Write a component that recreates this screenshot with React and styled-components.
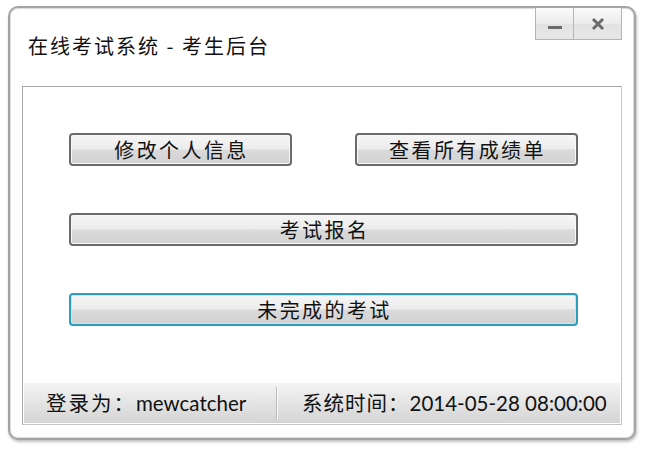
import React from "react";
import styled, { createGlobalStyle } from "styled-components";

const Global = createGlobalStyle`
  html, body { margin: 0; padding: 0; background: #ffffff; }
  body { font-family: Lato, "Noto Sans CJK SC", sans-serif; }
`;

const Page = styled.div`
  width: 650px;
  height: 450px;
  padding: 6px 0 0 8px;
  box-sizing: border-box;
`;

const Window = styled.div`
  width: 628px;
  height: 434px;
  box-sizing: border-box;
  border: 2px solid #a4a4a4;
  border-radius: 10px;
  background: #ffffff;
  box-shadow: 1px 2px 3px rgba(0, 0, 0, 0.25), inset 0 0 0 1px #dcdcdc;
  display: flex;
  flex-direction: column;
  padding: 0 12px 13px 12px;
`;

const TitleBar = styled.div`
  height: 78px;
  display: flex;
  align-items: flex-start;
  justify-content: space-between;
`;

const Title = styled.div`
  margin: 24px 0 0 6px;
  font-family: "Noto Sans CJK SC", sans-serif;
  font-size: 20px;
  line-height: 28px;
  letter-spacing: 2px;
  color: #111;
`;

const Controls = styled.div`
  display: flex;
`;

const CtrlButton = styled.div`
  width: ${(p) => p.$w}px;
  height: 32px;
  box-sizing: border-box;
  border: 1px solid #b4b4b4;
  border-top: none;
  margin-left: -1px;
  background: linear-gradient(#fafafa, #ececec 50%, #e2e2e2 51%, #e8e8e8);
  display: flex;
  align-items: center;
  justify-content: center;
  color: #6a6a6a;
`;

const Panel = styled.div`
  flex: 1;
  border: 1px solid #a8a8a8;
  border-right-color: #c4c4c4;
  border-bottom-color: #c4c4c4;
  display: flex;
  flex-direction: column;
`;

const Grid = styled.div`
  flex: 1;
  display: grid;
  grid-template-columns: 1fr 1fr;
  grid-auto-rows: 33px;
  column-gap: 63px;
  row-gap: 47px;
  padding: 46px 43px 0 46px;
  align-content: start;
`;

const Btn = styled.button`
  grid-column: ${(p) => (p.$wide ? "1 / span 2" : "auto")};
  height: 33px;
  margin: 0;
  padding: 0;
  box-sizing: border-box;
  border: ${(p) => (p.$focus ? "2px solid #2b9dbd" : "2px solid #6a6a6a")};
  border-radius: 4px;
  background: linear-gradient(#f6f6f6, #ececec 48%, #dadada 52%, #d2d2d2);
  box-shadow: inset 0 0 0 1px ${(p) => (p.$focus ? "#bfe6f2" : "#f8f8f8")};
  font-family: "Noto Sans CJK SC", sans-serif;
  font-size: 20px;
  line-height: 26px;
  letter-spacing: 2.4px;
  text-indent: 2px;
  color: #111;
  cursor: default;
`;

const StatusBar = styled.div`
  height: 40px;
  margin: 0 1px 1px 1px;
  background: linear-gradient(#f4f4f4, #e4e4e4 50%, #d4d4d4);
  display: flex;
  align-items: center;
`;

const StatusCell = styled.div`
  width: ${(p) => p.$w}px;
  box-sizing: border-box;
  padding-left: ${(p) => p.$pl}px;
  padding-bottom: 3px;
  font-family: Lato, "Noto Sans CJK SC", sans-serif;
  font-size: 20.5px;
  color: #111;
  white-space: nowrap;
`;

const Label = styled.span`
  letter-spacing: ${(p) => p.$ls}px;
`;

const Sep = styled.div`
  width: 1px;
  height: 32px;
  background: #b8b8b8;
  border-right: 1px solid #fafafa;
`;

export default function App() {
  return (
    <>
      <Global />
      <Page>
        <Window>
          <TitleBar>
            <Title>在线考试系统 - 考生后台</Title>
            <Controls>
              <CtrlButton $w={39}>
                <svg width="16" height="16" viewBox="0 0 16 16">
                  <rect x="1" y="10" width="14" height="3" fill="#6a6a6a" />
                </svg>
              </CtrlButton>
              <CtrlButton $w={49}>
                <svg width="14" height="14" viewBox="0 0 14 14">
                  <path d="M2 2 L12 12 M12 2 L2 12" stroke="#6a6a6a" strokeWidth="3" />
                </svg>
              </CtrlButton>
            </Controls>
          </TitleBar>
          <Panel>
            <Grid>
              <Btn>修改个人信息</Btn>
              <Btn>查看所有成绩单</Btn>
              <Btn $wide>考试报名</Btn>
              <Btn $wide $focus>未完成的考试</Btn>
            </Grid>
            <StatusBar>
              <StatusCell $w={252} $pl={22}><Label $ls={2}>登录为：</Label>mewcatcher</StatusCell>
              <Sep />
              <StatusCell $w={340} $pl={24}><Label $ls={1}>系统时间：</Label>2014-05-28 08:00:00</StatusCell>
            </StatusBar>
          </Panel>
        </Window>
      </Page>
    </>
  );
}
